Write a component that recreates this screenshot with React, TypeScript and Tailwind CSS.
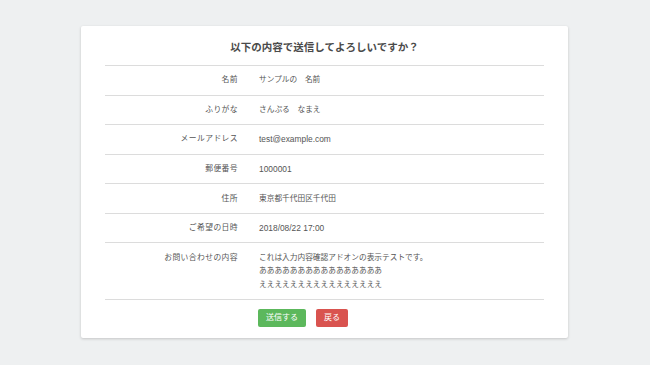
import React from "react";

const rows: { label: string; value: string[]; latin?: boolean }[] = [
  { label: "名前", value: ["サンプルの　名前"] },
  { label: "ふりがな", value: ["さんぷる　なまえ"] },
  { label: "メールアドレス", value: ["test@example.com"], latin: true },
  { label: "郵便番号", value: ["1000001"], latin: true },
  { label: "住所", value: ["東京都千代田区千代田"] },
  { label: "ご希望の日時", value: ["2018/08/22 17:00"], latin: true },
  {
    label: "お問い合わせの内容",
    value: [
      "これは入力内容確認アドオンの表示テストです。",
      "ああああああああああああああああ",
      "ええええええええええええええええ",
    ],
  },
];

export default function App() {
  return (
    <div
      className="w-[650px] h-[365px] bg-[#eef0f1] pt-[26px] pl-[81px]"
      style={{ fontFamily: '"Liberation Sans", "Noto Sans CJK JP", "Noto Sans", sans-serif' }}
    >
      <div className="w-[487px] h-[312px] bg-white rounded-[2px] shadow-[0_1px_3px_rgba(0,0,0,0.18)] px-[24px] pt-[13px]">
        <div className="text-center text-[10.5px] leading-[16px] font-bold text-[#4a4a4a] pb-[10px] border-b border-[#dcdcdc]">
          以下の内容で送信してよろしいですか？
        </div>
        {rows.map((r) => (
          <div key={r.label} className="flex items-start border-b border-[#dcdcdc] py-[7.4px]">
            <div className="w-[133px] shrink-0 text-right text-[7.8px] leading-[13.75px] text-[#555] tracking-[0.4px]">
              {r.label}
            </div>
            <div
              className={
                r.latin
                  ? "pl-[21px] text-[8.4px] leading-[13.75px] text-[#555] translate-y-[1px]"
                  : "pl-[21px] text-[7.7px] leading-[13.75px] text-[#555]"
              }
            >
              {r.value.map((v, i) => (
                <div key={i}>{v}</div>
              ))}
            </div>
          </div>
        ))}
        <div className="flex gap-[10px] pl-[153px] pt-[9px]">
          <div className="h-[18px] w-[48px] bg-[#5cb85c] rounded-[2px] text-white text-[8px] flex items-center justify-center">
            送信する
          </div>
          <div className="h-[18px] w-[32px] bg-[#d9534f] rounded-[2px] text-white text-[8px] flex items-center justify-center">
            戻る
          </div>
        </div>
      </div>
    </div>
  );
}
